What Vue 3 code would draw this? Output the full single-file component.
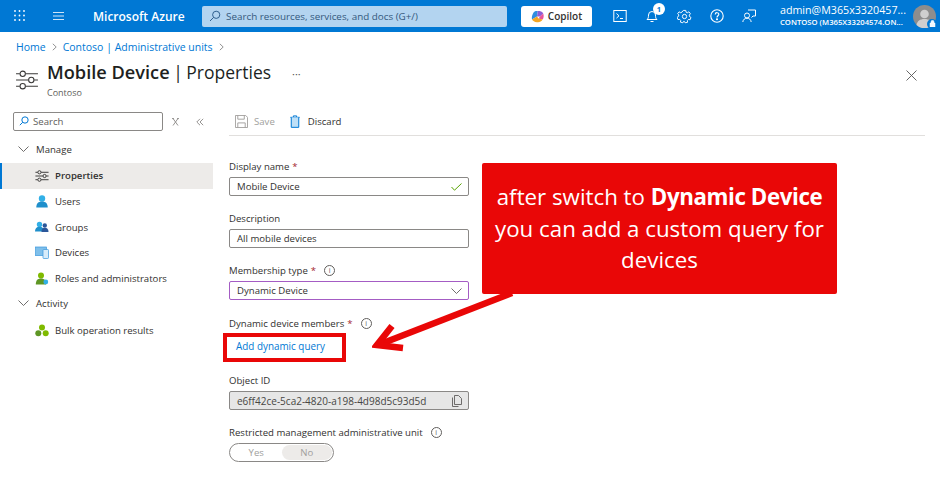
<template>
  <div class="portal">
    <header class="topbar">
      <svg class="waffle" width="12" height="12" viewBox="0 0 12 12" fill="#fff">
        <template v-for="y in [1, 5.5, 10]" :key="y">
          <circle v-for="x in [1, 5.5, 10]" :key="x" :cx="x" :cy="y" r="0.9" />
        </template>
      </svg>
      <svg class="burger" width="13" height="10" viewBox="0 0 13 10" stroke="#cfe4f7" stroke-width="1.1">
        <path d="M1 1.5h11M1 5h11M1 8.5h11" />
      </svg>
      <div class="brand">Microsoft Azure</div>
      <div class="global-search">
        <svg width="12" height="12" viewBox="0 0 12 12" fill="none" stroke="#2f5f8e" stroke-width="1">
          <circle cx="7.2" cy="4.8" r="3.6" />
          <path d="M4.6 7.4 1 11" />
        </svg>
        <span>Search resources, services, and docs (G+/)</span>
      </div>
      <button class="copilot">
        <svg width="13" height="13" viewBox="0 0 13 13">
          <path d="M2 3.5C3 1 5 .8 6.8 1L6 6.5 1 9.5C.6 7.5 1 5.5 2 3.5Z" fill="#2f8ee0" />
          <path d="M6.8 1c2.4 0 4.6.6 5.4 2.6L9 6.5 6 6.5Z" fill="#8c5fd6" />
          <path d="M12.2 3.6c.8 2 .6 4.4-.6 6L7.5 8.5 9 6.5Z" fill="#e8559a" />
          <path d="M1 9.5 6 6.5l1.5 2 4.1 1.1C10.5 12 8 12.5 6 12.2 3.5 12 1.8 11 1 9.5Z" fill="#f5a623" />
        </svg>
        Copilot
      </button>
      <div class="top-icons">
        <svg width="14" height="14" viewBox="0 0 14 14" fill="none" stroke="#fff" stroke-width="1">
          <rect x=".8" y="1.5" width="12.4" height="11" />
          <path d="m3.5 4.5 2.5 2.3-2.5 2.3M7 9.5h3" />
        </svg>
        <div class="bell">
          <svg width="14" height="14" viewBox="0 0 14 14" fill="none" stroke="#fff" stroke-width="1">
            <path d="M2 10.5c1.2-1 1.5-2 1.5-4.5a3.5 3.5 0 0 1 7 0c0 2.5.3 3.500 1.500 4.500ZM5.500 12.500h3" />
          </svg>
          <span class="badge">1</span>
        </div>
        <svg width="15" height="15" viewBox="0 0 16 16" fill="none" stroke="#fff" stroke-width="1">
          <circle cx="8" cy="8" r="2.3" />
          <path d="M6.7 1.5h2.6l.4 1.9 1.3.6 1.700-1 1.600 2-1.200 1.500.2 1.500 1.600 1-.9 2.400-1.900-.2-1 1.100.1 1.900-2.500.5-1-1.600H7.200l-1 1.600-2.500-.7.200-1.900-1-1-1.900.1-.9-2.400 1.600-1 .2-1.500L.7 5l1.500-2 1.800 1 1.300-.7Z" />
        </svg>
        <svg width="14" height="14" viewBox="0 0 14 14" fill="none" stroke="#fff" stroke-width="1.1">
          <circle cx="7" cy="7" r="6.2" />
          <path d="M5.2 5.4C5.3 3 8.900 3.200 8.800 5.400 8.700 6.800 7 6.800 7 8.500" />
          <circle cx="7" cy="10.3" r=".5" fill="#fff" />
        </svg>
        <svg width="14" height="14" viewBox="0 0 14 14" fill="none" stroke="#fff" stroke-width="1">
          <circle cx="5" cy="6.5" r="2.5" />
          <path d="M.8 13c.3-2.500 2-3.800 4.200-3.800S8.900 10.500 9.200 13M6 1h7.500v6H11l-1.500 1.500" />
        </svg>
      </div>
      <div class="account">
        <div class="account-name">admin@M365x3320457...</div>
        <div class="account-tenant">CONTOSO (M365X33204574.ON...</div>
      </div>
      <div class="avatar">
        <svg width="23" height="23" viewBox="0 0 23 23">
          <circle cx="11.5" cy="11.5" r="11.5" fill="#8d8d8d" />
          <circle cx="11.5" cy="9" r="4.3" fill="#cfcfcf" />
          <path d="M3.5 20c.6-4 3.500-6 8-6s7.400 2 8 6a11.500 11.500 0 0 1-16 0Z" fill="#cfcfcf" />
        </svg>
        <span class="lock">
          <svg width="7" height="7" viewBox="0 0 7 7"><path d="M1 3h5v4H1ZM2 3V1.800a1.500 1.500 0 0 1 3 0V3" fill="#fff" stroke="#fff" stroke-width=".5" fill-opacity=".95" /></svg>
        </span>
      </div>
    </header>

    <nav class="breadcrumb">
      <a>Home</a>
      <svg class="crumb-sep" width="5" height="8" viewBox="0 0 5 8" fill="none" stroke="#777" stroke-width=".8"><path d="m.8.8 3.400 3.200L.8 7.200" /></svg>
      <a>Contoso | Administrative units</a>
      <svg class="crumb-sep" width="5" height="8" viewBox="0 0 5 8" fill="none" stroke="#777" stroke-width=".8"><path d="m.8.8 3.400 3.200L.8 7.200" /></svg>
    </nav>

    <div class="title-row">
      <svg class="title-icon" width="22" height="20" viewBox="0 0 23 21" fill="none" stroke="#3b3a39" stroke-width="1.1">
        <path d="M0 4h4M10 4h13M0 10.5h13M19 10.5h4M0 17h4M10 17h13" />
        <circle cx="7" cy="4" r="2.8" />
        <circle cx="16" cy="10.5" r="2.8" />
        <circle cx="7" cy="17" r="2.8" />
      </svg>
      <div class="title-text">
        <h1><b>Mobile Device</b> | Properties</h1>
        <div class="subtitle">Contoso</div>
      </div>
      <div class="more">···</div>
      <svg class="close" width="11" height="11" viewBox="0 0 11 11" stroke="#555" stroke-width=".9"><path d="m.5.5 10 10M10.5.5l-10 10" /></svg>
    </div>

    <div class="body">
      <aside class="sidebar">
        <div class="side-search-row">
          <div class="side-search">
            <svg width="10" height="10" viewBox="0 0 12 12" fill="none" stroke="#0078d4" stroke-width="1.2">
              <circle cx="7.2" cy="4.8" r="3.8" />
              <path d="M4.5 7.5 1 11" />
            </svg>
            <span>Search</span>
          </div>
          <span class="side-tool">
            <svg width="7" height="8" viewBox="0 0 7 8" stroke="#8a8886" fill="none" stroke-width=".9"><path d="M1 .5 6 7.5M6 .5 1 7.5M0 .6h2M5 .6h2" /></svg>
          </span>
          <span class="side-tool">
            <svg width="8" height="8" viewBox="0 0 8 8" stroke="#8a8886" fill="none" stroke-width=".9"><path d="M4 .8.800 4 4 7.200M7.200.8 4 4l3.200 3.200" /></svg>
          </span>
        </div>

        <div class="group">
          <svg width="11" height="6" viewBox="0 0 11 6" fill="none" stroke="#605e5c" stroke-width=".9"><path d="m.5.5 5 5 5-5" /></svg>
          Manage
        </div>
        <div class="nav-item active">
          <svg width="13" height="12" viewBox="0 0 23 21" fill="none" stroke="#3b3a39" stroke-width="1.7">
            <path d="M0 4h4M10 4h13M0 10.5h13M19 10.5h4M0 17h4M10 17h13" />
            <circle cx="7" cy="4" r="2.8" />
            <circle cx="16" cy="10.5" r="2.8" />
            <circle cx="7" cy="17" r="2.8" />
          </svg>
          Properties
        </div>
        <div class="nav-item">
          <svg width="13" height="13" viewBox="0 0 13 13">
            <circle cx="6.5" cy="3.5" r="3.2" fill="#32b0e7" />
            <path d="M.8 12.5c0-4 2-6 5.700-6s5.700 2 5.700 6Z" fill="#1f8fcb" />
          </svg>
          Users
        </div>
        <div class="nav-item">
          <svg width="14" height="12" viewBox="0 0 14 12">
            <circle cx="4.5" cy="3.5" r="2.7" fill="#32b0e7" />
            <path d="M0 10.5c0-3 1.500-4.800 4.500-4.800S9 7.500 9 10.500Z" fill="#1f8fcb" />
            <circle cx="9.8" cy="4.5" r="2.2" fill="#2b579a" />
            <path d="M6.5 11c0-2.800 1-4.200 3.300-4.200s3.700 1.400 3.700 4.200Z" fill="#2b579a" />
          </svg>
          Groups
        </div>
        <div class="nav-item">
          <svg width="14" height="13" viewBox="0 0 14 13">
            <rect x="0" y="1" width="11.5" height="8.5" fill="#7fbfea" stroke="#3a96dd" stroke-width=".7" />
            <rect x="8" y="3.5" width="5.5" height="9" rx=".8" fill="#d8ecfa" stroke="#3a96dd" stroke-width=".7" />
          </svg>
          Devices
        </div>
        <div class="nav-item">
          <svg width="13" height="13" viewBox="0 0 13 13">
            <circle cx="5.5" cy="3.5" r="3" fill="#7fba00" />
            <path d="M.3 12.5c0-4 1.700-6 5.200-6s5 2 5 6Z" fill="#5e9624" />
            <circle cx="10.3" cy="10" r="2.4" fill="#32b0e7" />
          </svg>
          Roles and administrators
        </div>
        <div class="group activity">
          <svg width="11" height="6" viewBox="0 0 11 6" fill="none" stroke="#605e5c" stroke-width=".9"><path d="m.5.5 5 5 5-5" /></svg>
          Activity
        </div>
        <div class="nav-item">
          <svg width="14" height="13" viewBox="0 0 14 13" fill="#7fba00">
            <circle cx="7" cy="3.5" r="3" />
            <circle cx="3.3" cy="9.3" r="3" fill="#5e9624" />
            <circle cx="10.7" cy="9.3" r="3" />
          </svg>
          Bulk operation results
        </div>
      </aside>

      <main class="main">
        <div class="toolbar">
          <span class="tool disabled">
            <svg width="13" height="13" viewBox="0 0 14 14" fill="none" stroke="#a19f9d" stroke-width="1">
              <path d="M.5.5h11l2 2v11H.5Z" />
              <path d="M3 .5v4h7v-4M3 13.5v-5h8v5" />
            </svg>
            Save
          </span>
          <span class="tool">
            <svg width="10" height="13" viewBox="0 0 12 15" fill="none" stroke="#0078d4" stroke-width="1.2">
              <path d="M.5 2.5h11M4 2.5V.8h4v1.700" />
              <path d="M1.5 2.5v12h9v-12" fill="#bfe0f7" />
            </svg>
            Discard
          </span>
        </div>

        <div class="form">
          <div class="field">
            <label>Display name <em>*</em></label>
            <div class="input">
              <span>Mobile Device</span>
              <svg width="11" height="8" viewBox="0 0 11 8" fill="none" stroke="#57a300" stroke-width="1"><path d="m.5 4 3 3.200L10.500.5" /></svg>
            </div>
          </div>
          <div class="field">
            <label>Description</label>
            <div class="input"><span>All mobile devices</span></div>
          </div>
          <div class="field membership">
            <label>Membership type <em>*</em> <span class="info">i</span></label>
            <div class="input focused">
              <span>Dynamic Device</span>
              <svg width="11" height="6" viewBox="0 0 11 6" fill="none" stroke="#605e5c" stroke-width=".9"><path d="m.5.5 5 5 5-5" /></svg>
            </div>
          </div>
          <div class="field members">
            <label>Dynamic device members <em>*</em> <span class="info">i</span></label>
            <a class="query-link">Add dynamic query</a>
          </div>
          <div class="field">
            <label>Object ID</label>
            <div class="input readonly">
              <span>e6ff42ce-5ca2-4820-a198-4d98d5c93d5d</span>
              <svg width="10" height="12" viewBox="0 0 10 12" fill="none" stroke="#605e5c" stroke-width=".9"><path d="M.5 2.5v9h6M2.5.5h4l3 3v6h-7Z" /></svg>
            </div>
          </div>
          <div class="field">
            <label>Restricted management administrative unit <span class="info">i</span></label>
            <div class="toggle">
              <span>Yes</span>
              <span class="on">No</span>
            </div>
          </div>
        </div>
      </main>
    </div>

    <div class="callout">
      after switch to <b>Dynamic Device</b> you can add a custom query for devices
    </div>
    <div class="query-box"></div>
    <svg class="arrow" width="170" height="70" viewBox="0 0 170 70" fill="none" stroke="#e90707" stroke-width="6.5">
      <path d="M140 1 6 53" />
      <path d="M20 34 5 53l26 3" />
    </svg>
  </div>
</template>

<script setup>
</script>

<style>
html,
body {
  margin: 0;
  background: #fff;
}
</style>

<style scoped>
.portal {
  position: relative;
  width: 940px;
  height: 487px;
  overflow: hidden;
  background: #fff;
  color: #323130;
  font-family: "Open Sans", "Noto Sans", sans-serif;
  font-size: 9.6px;
}

.topbar {
  display: flex;
  align-items: center;
  height: 32px;
  background: #0078d4;
  color: #fff;
}

.waffle {
  margin-left: 14px;
}

.burger {
  margin-left: 26px;
}

.brand {
  margin-left: 28px;
  width: 109px;
  font-size: 12px;
  font-weight: 600;
  white-space: nowrap;
}

.global-search {
  display: flex;
  align-items: center;
  gap: 5px;
  width: 305px;
  height: 21px;
  padding-left: 7px;
  box-sizing: border-box;
  margin-right: 14px;
  background: #b3d4f0;
  border-radius: 2px;
  color: #33587c;
  font-size: 9.85px;
}

.copilot {
  display: flex;
  align-items: center;
  justify-content: center;
  gap: 4px;
  width: 71px;
  height: 21px;
  padding: 0;
  border: 0;
  border-radius: 3px;
  background: #fff;
  color: #323130;
  font-family: inherit;
  font-size: 10px;
  font-weight: 600;
}

.top-icons {
  display: flex;
  align-items: center;
  gap: 18px;
  margin-left: 21px;
}

.bell {
  position: relative;
  display: flex;
}

.badge {
  position: absolute;
  top: -6px;
  left: 8px;
  width: 12px;
  height: 12px;
  border-radius: 50%;
  background: #fff;
  color: #0078d4;
  font-size: 7.5px;
  font-weight: 700;
  line-height: 12px;
  text-align: center;
}

.account {
  margin-left: 24px;
  width: 131px;
  white-space: nowrap;
}

.account-name {
  font-size: 10.7px;
  line-height: 13px;
}

.account-tenant {
  font-size: 7.7px;
  font-weight: 600;
  line-height: 11px;
}

.avatar {
  position: relative;
  display: flex;
  margin-left: 2px;
}

.lock {
  position: absolute;
  right: -1px;
  bottom: -1px;
  display: flex;
  align-items: center;
  justify-content: center;
  width: 10px;
  height: 10px;
  border-radius: 50%;
  background: #0078d4;
}

.breadcrumb {
  display: flex;
  align-items: center;
  gap: 6px;
  height: 30px;
  padding-left: 16px;
  color: #0078d4;
  font-size: 10.5px;
}

.title-row {
  display: flex;
  align-items: flex-start;
  height: 50px;
  padding-left: 16px;
}

.title-icon {
  margin-top: 8px;
}

.title-text {
  margin-left: 9px;
}

h1 {
  margin: -2px 0 2px;
  color: #201f1e;
  font-size: 17.5px;
  font-weight: 400;
  line-height: 25px;
  word-spacing: -1px;
  white-space: nowrap;
}

h1 b {
  font-size: 18.2px;
  font-weight: 600;
  word-spacing: 0;
}

.subtitle {
  color: #605e5c;
  font-size: 9px;
  line-height: 12px;
}

.more {
  margin: 4px 0 0 21px;
  color: #555;
  font-size: 11px;
}

.close {
  margin: 8px 23px 0 auto;
}

.body {
  display: flex;
}

.sidebar {
  width: 213px;
  flex-shrink: 0;
}

.side-search-row {
  display: flex;
  align-items: center;
}

.side-search {
  display: flex;
  align-items: center;
  gap: 4px;
  width: 150px;
  height: 19px;
  margin-left: 13px;
  padding-left: 5px;
  padding-bottom: 1px;
  box-sizing: border-box;
  border: 1px solid #8a8886;
  border-radius: 2px;
  color: #605e5c;
}

.side-tool {
  display: flex;
  margin-left: 9px;
  margin-right: 8px;
}

.group {
  display: flex;
  align-items: center;
  gap: 7px;
  height: 20px;
  margin-top: 8px;
  margin-bottom: 4px;
  padding-left: 18px;
  color: #323130;
}

.group.activity {
  margin-top: 1px;
  margin-bottom: 3px;
  height: 22px;
}

.nav-item {
  display: flex;
  align-items: center;
  gap: 6px;
  height: 25.7px;
  padding-left: 35px;
  box-sizing: border-box;
  white-space: nowrap;
}

.nav-item svg {
  width: 14px;
  flex-shrink: 0;
}

.nav-item.active {
  border-left: 2px solid #0078d4;
  padding-left: 33px;
  background: #edebe9;
  font-weight: 600;
}

.main {
  flex: 1;
  padding-left: 16px;
  padding-right: 15px;
}

.toolbar {
  display: flex;
  align-items: center;
  gap: 15px;
  height: 18px;
  padding-bottom: 5px;
  padding-left: 6px;
  border-bottom: 1px solid #e1dfdd;
}

.tool {
  display: flex;
  align-items: center;
  gap: 8px;
}

.tool.disabled {
  gap: 6px;
  color: #a19f9d;
}

.form {
  padding-top: 23px;
}

.field {
  width: 240px;
  margin-bottom: 15px;
}

.field.membership {
  margin-bottom: 16px;
}

.field label {
  display: flex;
  align-items: center;
  gap: 3px;
  height: 15px;
  margin-bottom: 3px;
  white-space: nowrap;
}

em {
  color: #a4262c;
  font-style: normal;
}

.info {
  display: inline-block;
  width: 9px;
  height: 9px;
  margin-left: 5px;
  border: 1px solid #605e5c;
  border-radius: 50%;
  color: #605e5c;
  font-size: 7px;
  line-height: 9px;
  text-align: center;
}

.input {
  display: flex;
  align-items: center;
  justify-content: space-between;
  width: 240px;
  height: 19px;
  padding: 0 6px 0 7px;
  box-sizing: border-box;
  border: 1px solid #8a8886;
  border-radius: 2px;
  white-space: nowrap;
}

.input.focused {
  border-color: #a45cc4;
}

.input.readonly {
  background: #e6e6e6;
  color: #484644;
  font-size: 10px;
}

.members {
  margin-bottom: 20px;
}

.members label {
  margin-bottom: 8px;
}

.query-link {
  display: block;
  height: 14px;
  padding-left: 7px;
  color: #0078d4;
  font-size: 9.9px;
  line-height: 14px;
}

.toggle {
  display: flex;
  width: 105px;
  height: 19px;
  padding: 1px;
  box-sizing: border-box;
  border: 1px solid #8a8886;
  border-radius: 10px;
  color: #a19f9d;
  line-height: 15px;
  text-align: center;
}

.toggle span {
  flex: 1;
}

.toggle .on {
  background: #edebe9;
  border-radius: 9px;
}

.callout {
  position: absolute;
  left: 482px;
  top: 163px;
  width: 355px;
  height: 131px;
  box-sizing: border-box;
  padding: 18px 6px 0;
  border-radius: 2px;
  background: #e90707;
  color: #fff;
  font-family: "Open Sans", "Noto Sans", sans-serif;
  font-size: 22.3px;
  line-height: 31.5px;
  text-align: center;
}

.callout b {
  font-weight: 700;
  letter-spacing: -0.4px;
}

.query-box {
  position: absolute;
  left: 223px;
  top: 333px;
  width: 115px;
  height: 21px;
  border: 4px solid #e90707;
}

.arrow {
  position: absolute;
  left: 372px;
  top: 292px;
}
</style>
